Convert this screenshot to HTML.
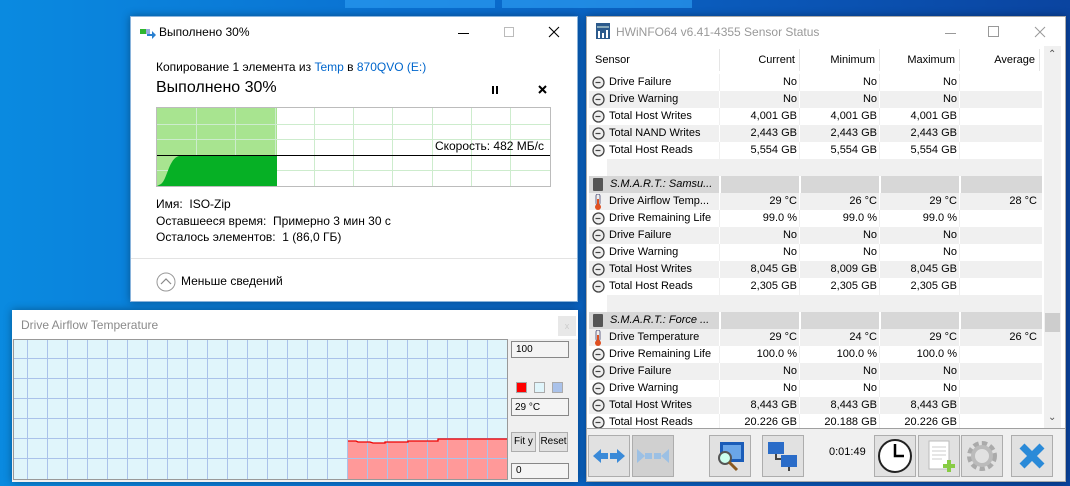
<!DOCTYPE html>
<html><head><meta charset="utf-8"><style>
*{margin:0;padding:0;box-sizing:border-box}
body{width:1070px;height:486px;overflow:hidden;position:relative;font-family:"Liberation Sans",sans-serif;background:linear-gradient(90deg,#0a8ae0 0%,#0a6fd0 40%,#0a55b5 75%,#0a44a0 100%)}
.abs{position:absolute}
.win{position:absolute;background:#fff;box-shadow:0 0 8px rgba(0,0,0,.35)}
.t{position:absolute;white-space:nowrap}
.c{position:absolute;top:0;height:16px;line-height:16px;white-space:nowrap}
.btn{position:absolute;top:435px;width:42px;height:42px;background:#e1e1e1;border:1px solid #adadad}
</style></head><body>
<div class="abs" style="left:345px;top:0;width:150px;height:8px;background:#2a9af0;opacity:.7"></div>
<div class="abs" style="left:502px;top:0;width:190px;height:8px;background:#2a9af0;opacity:.7"></div>

<div class="win" style="left:130px;top:16px;width:448px;height:286px;border:1px solid #8ab4dc">
  <svg class="abs" style="left:9px;top:10px" width="16" height="12"><rect x="0" y="2" width="6" height="5" fill="#2fb52f"/><rect x="6" y="2" width="4" height="5" fill="#9ad"/><path d="M7 7h5v-3l4 4-4 4v-3H7z" fill="#2a80d0"/></svg>
  <div class="t" style="left:28px;top:8px;font-size:12px">Выполнено 30%</div>
  <div class="abs" style="left:327px;top:16px;width:11px;height:1px;background:#000"></div>
  <div class="abs" style="left:373px;top:10px;width:10px;height:10px;border:1px solid #bbb"></div>
  <svg class="abs" style="left:417px;top:9px" width="12" height="12"><path d="M1 1L11 11M11 1L1 11" stroke="#000" stroke-width="1.1"/></svg>
  <div class="t" style="left:25px;top:43px;font-size:12px">Копирование 1 элемента из <span style="color:#0066cc">Temp</span> в <span style="color:#0066cc">870QVO (E:)</span></div>
  <div class="t" style="left:25px;top:62px;font-size:16px">Выполнено 30%</div>
  <div class="abs" style="left:361px;top:69px;width:2px;height:8px;background:#000"></div>
  <div class="abs" style="left:365px;top:69px;width:2px;height:8px;background:#000"></div>
  <svg class="abs" style="left:407px;top:68px" width="10" height="10"><path d="M1 1L8 8M8 1L1 8" stroke="#000" stroke-width="2"/></svg>
  <div class="abs" style="left:25px;top:90px;width:395px;height:80px;border:1px solid #bcbcbc;background:#fff;overflow:hidden">
    <svg width="393" height="78" style="position:absolute;left:0;top:0">
      <rect x="0" y="0" width="120" height="78" fill="#a8e490"/>
      <g stroke="#cdeccd" stroke-width="1">
        <line x1="39.5" y1="0" x2="39.5" y2="78"/><line x1="78.5" y1="0" x2="78.5" y2="78"/><line x1="118.5" y1="0" x2="118.5" y2="78"/>
        <line x1="157.5" y1="0" x2="157.5" y2="78"/><line x1="196.5" y1="0" x2="196.5" y2="78"/><line x1="235.5" y1="0" x2="235.5" y2="78"/>
        <line x1="275.5" y1="0" x2="275.5" y2="78"/><line x1="314.5" y1="0" x2="314.5" y2="78"/><line x1="353.5" y1="0" x2="353.5" y2="78"/>
        <line x1="0" y1="16.5" x2="393" y2="16.5"/><line x1="0" y1="31.5" x2="393" y2="31.5"/><line x1="0" y1="62.5" x2="393" y2="62.5"/>
      </g>
      <path d="M0 78L4 76C10 72 12 50 22 48L120 48L120 78Z" fill="#06b025"/>
      <line x1="0" y1="47.5" x2="393" y2="47.5" stroke="#000" stroke-width="1"/>
    </svg>
    <div class="t" style="right:6px;top:31px;font-size:12px">Скорость: 482 МБ/с</div>
  </div>
  <div class="t" style="left:25px;top:179px;font-size:12px;line-height:16.5px">Имя:&nbsp; ISO-Zip<br>Оставшееся время:&nbsp; Примерно 3 мин 30 с<br>Осталось элементов:&nbsp; 1 (86,0 ГБ)</div>
  <div class="abs" style="left:0;top:241px;width:446px;height:1px;background:#e3e3e3"></div>
  <svg class="abs" style="left:25px;top:255px" width="20" height="20"><circle cx="10" cy="10" r="9" fill="none" stroke="#999"/><path d="M5 12L10 7L15 12" fill="none" stroke="#888" stroke-width="1.2"/></svg>
  <div class="t" style="left:50px;top:257px;font-size:12px">Меньше сведений</div>
</div>

<div class="win" style="left:12px;top:310px;width:566px;height:172px;background:#f0f0f0">
  <div class="abs" style="left:0;top:0;width:566px;height:29px;background:#fff"></div>
  <div class="t" style="left:9px;top:8px;font-size:12px;color:#8a8a8a">Drive Airflow Temperature</div>
  <div class="abs" style="left:546px;top:6px;width:18px;height:20px;background:#e8e8e8;color:#ccc;font-size:9px;text-align:center;line-height:20px">x</div>
  <svg class="abs" style="left:1px;top:29px" width="495" height="141">
    <rect x="0" y="0" width="495" height="141" fill="#e0f5fb"/>
    <path d="M335 102L343 102L345 103L357 103L360 104L372 104L372 103L395 103L395 102L425 102L425 100L495 100L495 141L335 141Z" fill="#ff9999"/>
    <g stroke="#aac2ea" stroke-width="1">
      <path d="M14.5 0V141M34.5 0V141M54.5 0V141M74.5 0V141M94.5 0V141M114.5 0V141M134.5 0V141M154.5 0V141M174.5 0V141M194.5 0V141M214.5 0V141M234.5 0V141M254.5 0V141M274.5 0V141M294.5 0V141M314.5 0V141M334.5 0V141M354.5 0V141M374.5 0V141M394.5 0V141M414.5 0V141M434.5 0V141M454.5 0V141M474.5 0V141"/>
      <path d="M0 19.5H495M0 39.5H495M0 59.5H495M0 79.5H495M0 99.5H495M0 119.5H495"/>
    </g>
    <path d="M335 102L343 102L345 103L357 103L360 104L372 104L372 103L395 103L395 102L425 102L425 100L495 100" fill="none" stroke="#e00" stroke-width="1.3"/>
    <rect x="0.5" y="0.5" width="494" height="140" fill="none" stroke="#999"/>
  </svg>
  <div class="abs" style="left:499px;top:31px;width:58px;height:17px;background:#f4f4f4;border:1px solid #888;font-size:10px;padding:2px 4px">100</div>
  <div class="abs" style="left:504px;top:72px;width:11px;height:11px;background:#f00;border:1px solid #aaa"></div>
  <div class="abs" style="left:522px;top:72px;width:11px;height:11px;background:#e0f5fb;border:1px solid #aaa"></div>
  <div class="abs" style="left:540px;top:72px;width:11px;height:11px;background:#aac2ea;border:1px solid #aaa"></div>
  <div class="abs" style="left:499px;top:88px;width:58px;height:18px;background:#f4f4f4;border:1px solid #888;font-size:10px;padding:3px 3px">29 °C</div>
  <div class="abs" style="left:499px;top:122px;width:25px;height:20px;background:#e1e1e1;border:1px solid #adadad;font-size:10px;line-height:18px;text-align:center">Fit y</div>
  <div class="abs" style="left:527px;top:122px;width:29px;height:20px;background:#e1e1e1;border:1px solid #adadad;font-size:10px;line-height:18px;text-align:center">Reset</div>
  <div class="abs" style="left:499px;top:153px;width:58px;height:16px;background:#f4f4f4;border:1px solid #888;font-size:10px;padding:1px 4px">0</div>
</div>

<div class="win" style="left:586px;top:16px;width:480px;height:466px;background:#f0f0f0;border:1px solid #aaa">
  <div class="abs" style="left:0;top:0;width:478px;height:29px;background:#fff"></div>
  <svg class="abs" style="left:9px;top:6px" width="14" height="16"><rect x="0" y="0" width="14" height="16" fill="#2c5a8c"/><rect x="1" y="3" width="12" height="2" fill="#8ab"/><rect x="2" y="8" width="2" height="7" fill="#fff"/><rect x="6" y="10" width="2" height="5" fill="#fff"/><rect x="10" y="7" width="2" height="8" fill="#fff"/></svg>
  <div class="t" style="left:29px;top:8px;font-size:12px;color:#999">HWiNFO64 v6.41-4355 Sensor Status</div>
  <div class="abs" style="left:358px;top:16px;width:11px;height:1px;background:#999"></div>
  <div class="abs" style="left:401px;top:9px;width:11px;height:11px;border:1px solid #999"></div>
  <svg class="abs" style="left:447px;top:9px" width="12" height="12"><path d="M1 1L11 11M11 1L1 11" stroke="#999" stroke-width="1"/></svg>
  <div class="abs" style="left:0;top:29px;width:478px;height:382px;background:#fff;overflow:hidden">
    <div class="abs" style="left:0;top:0;width:456px;height:27px;background:#fff;font-size:11px">
      <div class="t" style="left:8px;top:8px">Sensor</div>
      <div class="t" style="right:248px;top:8px">Current</div>
      <div class="t" style="right:168px;top:8px">Minimum</div>
      <div class="t" style="right:88px;top:8px">Maximum</div>
      <div class="t" style="right:8px;top:8px">Average</div>
      <div class="abs" style="left:132px;top:3px;width:1px;height:22px;background:#e5e5e5"></div>
      <div class="abs" style="left:212px;top:3px;width:1px;height:22px;background:#e5e5e5"></div>
      <div class="abs" style="left:292px;top:3px;width:1px;height:22px;background:#e5e5e5"></div>
      <div class="abs" style="left:372px;top:3px;width:1px;height:22px;background:#e5e5e5"></div>
      <div class="abs" style="left:452px;top:3px;width:1px;height:22px;background:#e5e5e5"></div>
    </div>
    <div class="abs" style="left:457px;top:0;width:17px;height:382px;background:#f0f0f0"></div>
    <div class="t" style="left:461px;top:3px;font-size:10px;color:#555">&#8963;</div>
    <div class="abs" style="left:458px;top:267px;width:15px;height:19px;background:#cdcdcd"></div>
    <div class="t" style="left:461px;top:366px;font-size:10px;color:#555">&#8964;</div>
    <div id="rows"></div>
  </div>
  <div class="abs" style="left:0;top:411px;width:478px;height:1px;background:#a0a0a0"></div>
  <div class="btn" style="left:1px;top:418px"><svg width="40" height="40"><path d="M4 20l8-7v4h7v6h-7v4z" fill="#3a8ad8"/><path d="M36 20l-8-7v4h-7v6h7v4z" fill="#3a8ad8"/></svg></div>
  <div class="btn" style="left:45px;top:418px;background:#d0d0d0"><svg width="40" height="40"><path d="M4 13l8 7-8 7zM19 17v6h-7l0-6z" fill="#9cc0e4"/><path d="M36 13l-8 7 8 7zM21 17v6h7v-6z" fill="#9cc0e4"/></svg></div>
  <div class="btn" style="left:122px;top:418px"><svg width="40" height="40"><rect x="10" y="6" width="24" height="20" fill="#1a5cb8"/><rect x="13" y="9" width="18" height="14" fill="#6aa6e8"/><circle cx="15" cy="22" r="6" fill="#cfe" stroke="#555" stroke-width="2"/><path d="M19 26l8 8" stroke="#8a5a20" stroke-width="3"/></svg></div>
  <div class="btn" style="left:175px;top:418px"><svg width="40" height="40"><rect x="5" y="6" width="16" height="12" fill="#2a6cc8"/><rect x="18" y="19" width="16" height="12" fill="#2a6cc8"/><path d="M13 18v5h5M26 31v4" stroke="#444" stroke-width="2" fill="none"/></svg></div>
  <div class="t" style="left:242px;top:429px;font-size:11px">0:01:49</div>
  <div class="btn" style="left:287px;top:418px"><svg width="40" height="40"><circle cx="20" cy="20" r="16" fill="#fff" stroke="#222" stroke-width="2"/><path d="M20 8v12h9" stroke="#000" stroke-width="2.5" fill="none"/></svg></div>
  <div class="btn" style="left:331px;top:418px"><svg width="40" height="40"><rect x="10" y="5" width="20" height="28" fill="#fff" stroke="#bbb"/><path d="M13 11h14M13 15h14M13 19h14M13 23h10" stroke="#ccc"/><path d="M24 30h12M30 24v12" stroke="#8c4" stroke-width="4"/></svg></div>
  <div class="btn" style="left:374px;top:418px"><svg width="40" height="40"><circle cx="20" cy="20" r="12" fill="none" stroke="#aaa" stroke-width="6" stroke-dasharray="5 3"/><circle cx="20" cy="20" r="9" fill="none" stroke="#bbb" stroke-width="4"/></svg></div>
  <div class="btn" style="left:424px;top:418px"><svg width="40" height="40"><path d="M10 10L30 30M30 10L10 30" stroke="#2a8ad8" stroke-width="7"/></svg></div>
</div>

<script>
var R=[
["c","Drive Failure","No","No","No",""],
["c","Drive Warning","No","No","No",""],
["c","Total Host Writes","4,001 GB","4,001 GB","4,001 GB",""],
["c","Total NAND Writes","2,443 GB","2,443 GB","2,443 GB",""],
["c","Total Host Reads","5,554 GB","5,554 GB","5,554 GB",""],
["e"],
["h","S.M.A.R.T.: Samsu..."],
["t","Drive Airflow Temp...","29 °C","26 °C","29 °C","28 °C"],
["c","Drive Remaining Life","99.0 %","99.0 %","99.0 %",""],
["c","Drive Failure","No","No","No",""],
["c","Drive Warning","No","No","No",""],
["c","Total Host Writes","8,045 GB","8,009 GB","8,045 GB",""],
["c","Total Host Reads","2,305 GB","2,305 GB","2,305 GB",""],
["e"],
["h","S.M.A.R.T.: Force ..."],
["t","Drive Temperature","29 °C","24 °C","29 °C","26 °C"],
["c","Drive Remaining Life","100.0 %","100.0 %","100.0 %",""],
["c","Drive Failure","No","No","No",""],
["c","Drive Warning","No","No","No",""],
["c","Total Host Writes","8,443 GB","8,443 GB","8,443 GB",""],
["c","Total Host Reads","20.226 GB","20.188 GB","20.226 GB",""]];
var h="";
R.forEach(function(r,i){
 var top=28+17*i, bg=(i%2)?"#f0f0f0":"#fff";
 if(r[0]=="h")bg="#d7d7d7"; if(r[0]=="e")bg="#f0f0f0";
 h+='<div class="abs" style="left:2px;top:'+top+'px;width:453px;height:17px;background:'+bg+';font-size:11px">';
 if(r[0]=="e"){h+='<div class="abs" style="left:0;top:0;width:18px;height:17px;background:#fff"></div></div>';return;}
 var ic='';
 if(r[0]=="c")ic='<svg class="abs" style="left:3px;top:2px" width="13" height="13"><circle cx="6.5" cy="6.5" r="5.5" fill="#eee" stroke="#444" stroke-width="1.3"/><path d="M3.5 6.5h5" stroke="#444" stroke-width="1.2"/></svg>';
 if(r[0]=="t")ic='<svg class="abs" style="left:5px;top:1px" width="8" height="16"><rect x="2" y="0" width="4" height="11" rx="2" fill="#eee" stroke="#668"/><rect x="3" y="5" width="2" height="7" fill="#e05020"/><circle cx="4" cy="13" r="3" fill="#e05020"/></svg>';
 if(r[0]=="h")ic='<div class="abs" style="left:4px;top:2px;width:10px;height:13px;background:#555;border-radius:1px"></div>';
 h+=ic;
 if(r[0]=="h"){h+='<div class="c" style="left:21px;font-style:italic">'+r[1]+'</div>';
  [130,210,290,370].forEach(function(x){h+='<div class="abs" style="left:'+x+'px;top:0;width:2px;height:17px;background:#fff"></div>';});
 } else {
  h+='<div class="c" style="left:20px">'+r[1]+'</div>';
  h+='<div class="c" style="right:245px">'+r[2]+'</div><div class="c" style="right:165px">'+r[3]+'</div><div class="c" style="right:85px">'+r[4]+'</div><div class="c" style="right:5px">'+r[5]+'</div>';
  [130,210,290,370].forEach(function(x){h+='<div class="abs" style="left:'+x+'px;top:0;width:1px;height:17px;background:'+(i%2?'#fff':'#f0f0f0')+'"></div>';});
 }
 h+='</div>';
});
document.getElementById("rows").innerHTML=h;
</script>
</body></html>
